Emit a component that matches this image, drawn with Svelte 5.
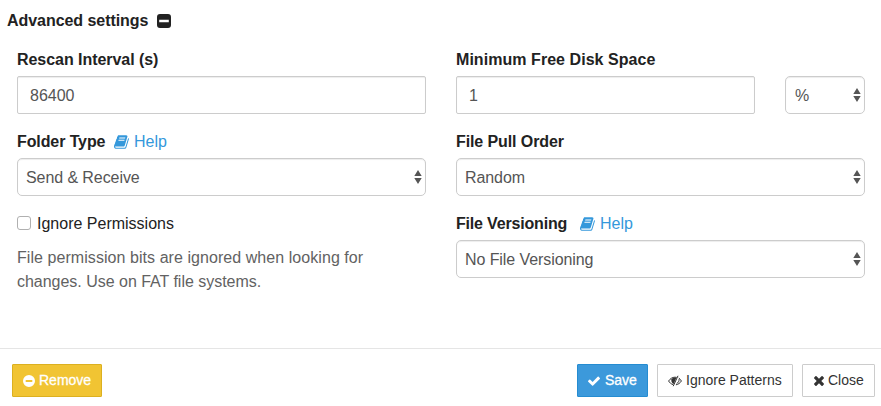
<script lang="ts">
	let rescanInterval = $state('86400');
	let minDiskFree = $state('1');
	let ignorePermissions = $state(false);
</script>

{#snippet book()}
	<svg class="icon-book" viewBox="0 0 1792 1792" aria-hidden="true">
		<path d="M1639 478q40 57 18 129l-275 906q-19 64-76.5 107.5t-122.5 43.5h-923q-77 0-148.5-53.5t-99.5-131.5q-24-67-2-127 0-4 3-27t4-37q1-8-3-21.5t-3-19.5q2-11 8-21t16.5-23.5 16.5-23.5q23-38 45-91.5t30-91.5q3-10 .5-30t-.5-28q3-11 17-28t17-23q21-36 42-92t25-90q1-9-2.5-32t.5-28q4-13 22-30.5t22-22.5q19-26 42.5-84.5t27.5-96.5q1-8-3-25.5t-2-26.5q2-8 9-18t18-23 17-21q8-12 16.5-30.5t15-35 16-36 19.5-32 26.5-23.5 36-11.5 47.5 5.5l-1 3q38-9 51-9h761q74 0 114 56t18 130l-274 906q-36 119-71.5 153.5t-128.5 34.5h-869q-27 0-38 15-11 16-1 43 24 70 144 70h923q29 0 56-15.5t35-41.5l300-987q7-22 5-57 38 15 59 43zm-1064 2q-4 13 2 22.5t20 9.5h608q13 0 25.5-9.5t16.5-22.5l21-64q4-13-2-22.5t-20-9.5h-608q-13 0-25.5 9.5t-16.5 22.5zm-83 256q-4 13 2 22.5t20 9.5h608q13 0 25.5-9.5t16.5-22.5l21-64q4-13-2-22.5t-20-9.5h-608q-13 0-25.5 9.5t-16.5 22.5z" />
	</svg>
{/snippet}

{#snippet select(id: string, value: string)}
	<div class="select-wrap">
		<select {id} class="form-control">
			<option>{value}</option>
		</select>
		<svg class="arrows" viewBox="0 0 8 16" aria-hidden="true">
			<path d="M4 1 7.7 7H.3zM.3 9h7.4L4 15z" />
		</svg>
	</div>
{/snippet}

<div class="modal-body">
	<div class="advanced">
		<span class="advanced-title">Advanced settings</span>
		<svg class="icon-toggle" viewBox="0 0 14 14" aria-hidden="true">
			<path fill-rule="evenodd" d="M3 0h8a3 3 0 0 1 3 3v8a3 3 0 0 1-3 3H3a3 3 0 0 1-3-3V3a3 3 0 0 1 3-3zm-.8 5.8v2.4h9.6V5.8z" />
		</svg>
	</div>

	<div class="row">
		<div class="col">
			<div class="form-group">
				<label for="rescanInterval" class="l-rescan">Rescan Interval (s)</label>
				<input id="rescanInterval" class="form-control" bind:value={rescanInterval} />
			</div>
			<div class="form-group">
				<div class="label-row">
					<label for="folderType" class="l-type">Folder Type</label>
					<a href="#help">{@render book()}<span>Help</span></a>
				</div>
				{@render select('folderType', 'Send & Receive')}
			</div>
			<div class="form-group">
				<label class="checkbox">
					<input type="checkbox" bind:checked={ignorePermissions} />
					<span>Ignore Permissions</span>
				</label>
				<p class="help-block">
					<span class="h-first">File permission bits are ignored when looking for</span><br />
					<span class="h-second">changes. Use on FAT file systems.</span>
				</p>
			</div>
		</div>

		<div class="col">
			<div class="form-group">
				<label for="minDiskFree" class="l-disk">Minimum Free Disk Space</label>
				<div class="disk-row">
					<input id="minDiskFree" class="form-control" bind:value={minDiskFree} />
					{@render select('diskUnit', '%')}
				</div>
			</div>
			<div class="form-group">
				<label for="pullOrder" class="l-order">File Pull Order</label>
				{@render select('pullOrder', 'Random')}
			</div>
			<div class="form-group">
				<div class="label-row">
					<label for="versioning" class="l-version">File Versioning</label>
					<a href="#help">{@render book()}<span>Help</span></a>
				</div>
				{@render select('versioning', 'No File Versioning')}
			</div>
		</div>
	</div>
</div>

<div class="modal-footer">
	<button class="btn btn-warning">
		<svg viewBox="0 0 12 12" aria-hidden="true">
			<path fill-rule="evenodd" d="M6 0a6 6 0 1 1 0 12A6 6 0 0 1 6 0zM2.7 5v2h6.6V5z" />
		</svg>
		<span>Remove</span>
	</button>
	<div class="actions">
		<button class="btn btn-primary">
			<svg class="icon-check" viewBox="121 278 1550 1244" aria-hidden="true">
				<path d="M1671 566q0 40-28 68l-724 724-136 136q-28 28-68 28t-68-28l-136-136-362-362q-28-28-28-68t28-68l136-136q28-28 68-28t68 28l294 295 656-657q28-28 68-28t68 28l136 136q28 28 28 68z" />
			</svg>
			<span>Save</span>
		</button>
		<button class="btn btn-default btn-ignore">
			<svg class="icon-eye" viewBox="0 0 14 12" aria-hidden="true">
				<path class="line" d="M5 9.6C3.1 9 1.6 7.7.6 6 2.2 3.6 4.4 2.2 7 2.2c.6 0 1.2.1 1.7.2M10.8 3.1C11.9 3.8 12.7 4.8 13.4 6c-1.3 2.1-3.2 3.5-5.500 3.800" />
				<path class="line" d="M10 .8 5.200 11.200M11 4.200c.3 1.900-.7 3.600-2.300 4.200" />
				<path d="M8.300 3 5.700 8.900C3.800 8.200 2.900 6.200 3.500 4.200 4.600 3 6.400 2.500 8.300 3z" />
			</svg>
			<span>Ignore Patterns</span>
		</button>
		<button class="btn btn-default btn-close">
			<svg class="icon-times" viewBox="302 366 1188 1188" aria-hidden="true">
				<path d="M1490 1322q0 40-28 68l-136 136q-28 28-68 28t-68-28l-294-294-294 294q-28 28-68 28t-68-28l-136-136q-28-28-28-68t28-68l294-294-294-294q-28-28-28-68t28-68l136-136q28-28 68-28t68 28l294 294 294-294q28-28 68-28t68 28l136 136q28 28 28 68t-28 68l-294 294 294 294q28 28 28 68z" />
			</svg>
			<span>Close</span>
		</button>
	</div>
</div>

<style>
	:global(body) {
		background: #fff;
		color: #222;
		font: 16px/24px 'Liberation Sans', Arial, sans-serif;
	}

	svg {
		display: block;
		flex: none;
		fill: currentColor;
	}

	.modal-body {
		box-sizing: border-box;
		height: 348px;
		padding: 9px 16px 0 7px;
	}

	.advanced {
		display: flex;
		align-items: center;
		font-weight: 700;
		height: 24px;
	}

	.advanced-title {
		width: 150px;
		letter-spacing: -0.05px;
		white-space: nowrap;
	}

	.icon-toggle {
		width: 14px;
		height: 14px;
		margin-bottom: 1px;
	}

	.row {
		display: grid;
		grid-template-columns: 409px 409px;
		gap: 30px;
		margin: 15px 0 0 10px;
	}

	.form-group {
		margin-bottom: 16px;
	}

	label {
		display: block;
		font-weight: 700;
		margin-bottom: 4px;
		white-space: nowrap;
	}

	.label-row {
		display: flex;
	}

	.label-row a {
		display: flex;
		align-items: center;
		height: 24px;
		color: #3498db;
		text-decoration: none;
	}

	.l-rescan {
		letter-spacing: -0.05px;
	}

	.l-disk {
		letter-spacing: 0.05px;
	}

	.l-order {
		letter-spacing: -0.1px;
	}

	.l-type {
		width: 97px;
		letter-spacing: -0.1px;
	}

	.l-version {
		width: 124px;
		letter-spacing: -0.18px;
	}

	.icon-book {
		width: 16px;
		height: 16px;
		margin: 0 4px 1px 0;
	}

	.form-control {
		display: block;
		box-sizing: border-box;
		width: 100%;
		height: 38px;
		margin: 0;
		padding: 8px 12px 6px;
		border: 1px solid #ccc;
		border-radius: 2px;
		background: #fff;
		box-shadow: inset 0 1px 1px rgba(0, 0, 0, 0.075);
		color: #555;
		font: inherit;
		appearance: none;
	}

	select.form-control {
		padding: 7px 8px 5px;
		border-radius: 5px;
		letter-spacing: -0.08px;
	}

	.disk-row select.form-control {
		padding-left: 9px;
	}

	.select-wrap {
		position: relative;
	}

	.arrows {
		position: absolute;
		top: 11px;
		right: 4.5px;
		width: 8px;
		height: 16px;
		fill: #555;
		pointer-events: none;
	}

	.disk-row {
		display: grid;
		grid-template-columns: 299px 80px;
		gap: 30px;
	}

	.checkbox {
		display: flex;
		align-items: center;
		gap: 6px;
		margin-bottom: 10px;
		font-weight: 400;
	}

	.checkbox input {
		box-sizing: border-box;
		width: 14px;
		height: 14px;
		margin: 0 0 2px;
		border: 1px solid #b0b0b0;
		border-radius: 3px;
		background: #fff;
		appearance: none;
	}

	.help-block {
		margin: 0;
		color: #626262;
		white-space: nowrap;
	}

	.h-first {
		letter-spacing: 0.06px;
	}

	.h-second {
		letter-spacing: -0.02px;
	}

	.modal-footer {
		display: flex;
		justify-content: space-between;
		padding: 15px 6px 9px 12px;
		border-top: 1px solid #e5e5e5;
	}

	.actions {
		display: flex;
		gap: 9px;
	}

	.btn {
		display: flex;
		align-items: center;
		box-sizing: border-box;
		height: 33px;
		padding: 0 10px;
		border: 1px solid #ccc;
		border-radius: 1px;
		background: #fff;
		color: #333;
		font: 14px/21px 'Liberation Sans', Arial, sans-serif;
		white-space: nowrap;
	}

	.btn-warning {
		width: 90px;
		border-color: #dcb020;
		background: #f1c433;
		color: #fff;
		-webkit-text-stroke: 0.3px #fff;
	}

	.btn-warning svg {
		width: 12px;
		height: 12px;
		margin-right: 4px;
	}

	.btn-primary {
		width: 71px;
		border-color: #258cd1;
		background: #3c99db;
		color: #fff;
		-webkit-text-stroke: 0.3px #fff;
	}

	.btn-ignore {
		width: 136px;
	}

	.btn-close {
		width: 73px;
	}

	.icon-check {
		width: 12px;
		height: 10px;
		margin-right: 5px;
	}

	.icon-eye {
		width: 14px;
		height: 12px;
		margin-right: 4px;
	}

	.icon-eye .line {
		fill: none;
		stroke: currentColor;
		stroke-width: 1;
	}

	.icon-times {
		width: 10px;
		height: 10px;
		margin: 0 4px 0 1px;
	}
</style>
